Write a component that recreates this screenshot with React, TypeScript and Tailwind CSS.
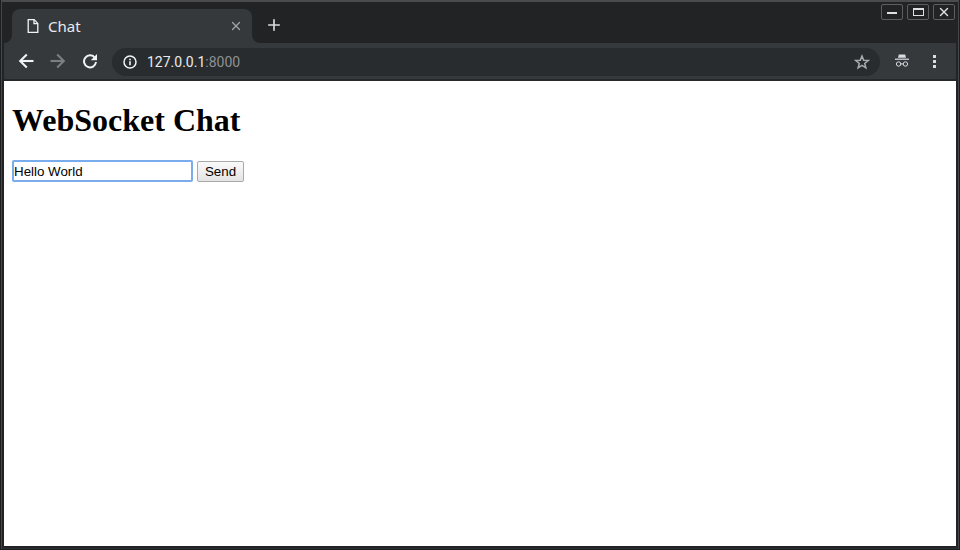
import React from 'react';
import { Plus, X } from 'lucide-react';

const FileIcon = () => (
  <svg width="16" height="16" viewBox="0 0 16 16" fill="none" stroke="#f1f3f4" strokeWidth="1.3">
    <path d="M3.2 1.6h6l3.6 3.8v9H3.2z" />
    <path d="M9 1.6v4h3.8" />
  </svg>
);

const BackIcon = ({ className }: { className: string }) => (
  <svg width="16" height="16" viewBox="0 0 16 16" className={className} fill="none" stroke="currentColor" strokeWidth="2.1">
    <path d="M15.5 8H2.5" />
    <path d="M8.8 1.5 2.2 8l6.6 6.5" />
  </svg>
);

const ReloadIcon = () => (
  <svg width="16" height="16" viewBox="0 0 16 16" fill="none" className="text-[#f1f3f4]">
    <path d="M13 5A6 6 0 1 0 14 9" stroke="currentColor" strokeWidth="2" />
    <path d="M15 1v6.2H8.8z" fill="currentColor" />
  </svg>
);

const InfoIcon = () => (
  <svg width="14" height="14" viewBox="0 0 14 14" fill="none">
    <circle cx="7" cy="7" r="6" stroke="#f1f3f4" strokeWidth="1.5" />
    <rect x="6.2" y="6.2" width="1.6" height="4" fill="#f1f3f4" />
    <rect x="6.2" y="3.7" width="1.6" height="1.6" fill="#f1f3f4" />
  </svg>
);

const StarIcon = () => (
  <svg width="16" height="16" viewBox="0 0 16 16" fill="none" stroke="#a9acaf" strokeWidth="1.5" strokeLinejoin="miter">
    <path d="M8 2l1.7 4.2 4.5.3-3.5 2.9 1.2 4.4L8 11.4l-3.9 2.4 1.2-4.4-3.5-2.9 4.5-.3z" />
  </svg>
);

const IncognitoIcon = () => (
  <svg width="16" height="16" viewBox="0 0 16 16" fill="#dadce0">
    <path d="M4.8 1.5h6.4l.8 3.2H4z" />
    <rect x="1" y="5.6" width="14" height="1.2" />
    <circle cx="4.6" cy="11" r="2.2" fill="none" stroke="#dadce0" strokeWidth="1" />
    <circle cx="11.4" cy="11" r="2.2" fill="none" stroke="#dadce0" strokeWidth="1" />
    <rect x="6.6" y="10.4" width="2.8" height="1" />
  </svg>
);

const TabCorner = ({ flip }: { flip?: boolean }) => (
  <svg width="8" height="8" viewBox="0 0 8 8" className={flip ? 'absolute bottom-0 -right-2 -scale-x-100' : 'absolute bottom-0 -left-2'}>
    <path d="M8 0v8H0a8 8 0 0 0 8-8z" fill="#35393c" />
  </svg>
);

const WinButton = ({ children }: { children: React.ReactNode }) => (
  <div className="w-[22px] h-4 rounded-[2px] border border-[#5c5e60] flex items-center justify-center">{children}</div>
);

export default function App() {
  return (
    <div className="w-[960px] h-[550px] overflow-hidden bg-[#1c1d1e] pb-px px-px font-['Roboto',sans-serif]">
      <div className="h-full border-x border-b border-x-[#45474a] border-b-[#2c2e30] border-t-2 border-t-[#4a4b4d] bg-[#212325] px-[2px] pb-[2px] flex flex-col">
        <div className="h-[41px] flex shrink-0">
          <div className="relative mt-[7px] ml-2 w-[240px] h-[34px] bg-[#35393c] rounded-t-lg flex items-center pl-[13px] pr-2">
            <TabCorner />
            <TabCorner flip />
            <FileIcon />
            <span className="ml-[7px] text-[15px] text-[#e8eaed] font-['Noto_Sans',sans-serif]">Chat</span>
            <X size={14} strokeWidth={2.2} className="ml-auto mr-[1px] text-[#a3a6a9]" />
          </div>
          <div className="mt-[14px] ml-[13px]">
            <Plus size={18} strokeWidth={2.2} className="text-[#dadce0]" />
          </div>
          <div className="ml-auto mr-[1px] pt-[2px] flex gap-[4px]">
            <WinButton><div className="w-[10px] h-[2px] bg-[#e0e0e0] mt-[2px]" /></WinButton>
            <WinButton><div className="w-[11px] h-2 border border-[#e0e0e0] border-t-2" /></WinButton>
            <WinButton><X size={14} strokeWidth={2.4} className="text-[#e0e0e0]" /></WinButton>
          </div>
        </div>

        <div className="h-[36px] bg-[#35393c] flex items-center shrink-0 pl-[14px] pr-[10px]">
          <BackIcon className="text-[#f1f3f4]" />
          <BackIcon className="ml-[16px] rotate-180 text-[#7c7f82]" />
          <div className="ml-[16px]"><ReloadIcon /></div>
          <div className="ml-[14px] mt-[2px] w-[768px] h-[28px] rounded-full bg-[#292c2f] flex items-center pl-[11px] pr-[10px]">
            <InfoIcon />
            <span className="ml-[10px] text-[14px] text-[#e8eaed]">127.0.0.1<span className="text-[#8e9194]">:8000</span></span>
            <div className="ml-auto"><StarIcon /></div>
          </div>
          <div className="ml-[14px]"><IncognitoIcon /></div>
          <div className="ml-[23px] flex flex-col gap-[2px]">
            <div className="size-[3px] bg-[#dadce0]" />
            <div className="size-[3px] bg-[#dadce0]" />
            <div className="size-[3px] bg-[#dadce0]" />
          </div>
        </div>

        <div className="h-[2px] bg-[#26282a] shrink-0" />

        <div className="flex-1 bg-white p-2 font-['Liberation_Sans',sans-serif]">
          <h1 className="mt-[13px] text-[32px] leading-[37px] font-bold text-black font-['Liberation_Serif',serif]">WebSocket Chat</h1>
          <form className="mt-[21px] flex items-start">
            <input
              defaultValue="Hello World"
              className="w-[181px] h-[22px] px-0 text-[13.33px] text-black rounded-[2px] border-2 border-[#78acec] outline-none"
            />
            <button type="button" className="ml-[4px] mt-px w-[47px] h-[21px] text-[13.33px] text-black rounded-[2px] border border-[#a9a9a9] bg-gradient-to-b from-[#fafafa] to-[#e4e4e4]">Send</button>
          </form>
        </div>
      </div>
    </div>
  );
}
